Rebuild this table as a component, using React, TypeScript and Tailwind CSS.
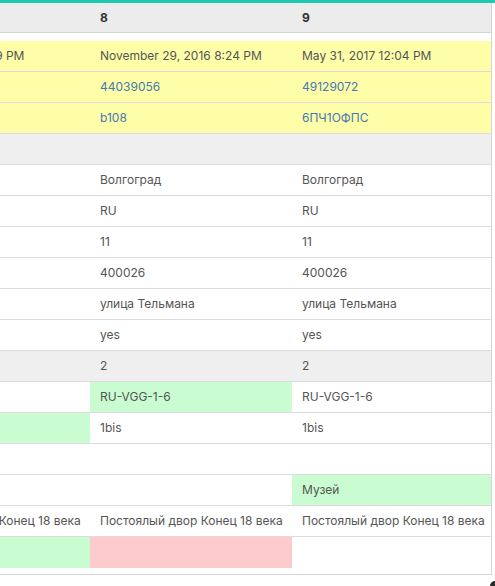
type Tone = "yellow" | "green" | "pink" | "gray" | "white";

interface Cell {
  text?: string;
  link?: boolean;
  tone?: Tone;
}

const TONE: Record<Tone, string> = {
  yellow: "bg-[#fefea9]",
  green: "bg-[#c9fdd1]",
  pink: "bg-[#fdcbcb]",
  gray: "bg-[#efefef]",
  white: "bg-white",
};

const WIDTHS = ["w-[202px]", "w-[202px]", "w-[199px]"];

// one row = [left (clipped), 8, 9]; row tone applies unless a cell overrides it
const ROWS: { tone: Tone; cells: Cell[] }[] = [
  { tone: "yellow", cells: [{ text: "June 14, 2016 1:49 PM" }, { text: "November 29, 2016 8:24 PM" }, { text: "May 31, 2017 12:04 PM" }] },
  { tone: "yellow", cells: [{}, { text: "44039056", link: true }, { text: "49129072", link: true }] },
  { tone: "yellow", cells: [{}, { text: "b108", link: true }, { text: "6ПЧ1ОФПС", link: true }] },
  { tone: "gray", cells: [{}, {}, {}] },
  { tone: "white", cells: [{}, { text: "Волгоград" }, { text: "Волгоград" }] },
  { tone: "white", cells: [{}, { text: "RU" }, { text: "RU" }] },
  { tone: "white", cells: [{}, { text: "11" }, { text: "11" }] },
  { tone: "white", cells: [{}, { text: "400026" }, { text: "400026" }] },
  { tone: "white", cells: [{}, { text: "улица Тельмана" }, { text: "улица Тельмана" }] },
  { tone: "white", cells: [{}, { text: "yes" }, { text: "yes" }] },
  { tone: "gray", cells: [{}, { text: "2" }, { text: "2" }] },
  { tone: "white", cells: [{}, { text: "RU-VGG-1-6", tone: "green" }, { text: "RU-VGG-1-6" }] },
  { tone: "white", cells: [{ tone: "green" }, { text: "1bis" }, { text: "1bis" }] },
  { tone: "white", cells: [{}, {}, {}] },
  { tone: "white", cells: [{}, {}, { text: "Музей", tone: "green" }] },
  {
    tone: "white",
    cells: [
      { text: "Постоялый двор Конец 18 века" },
      { text: "Постоялый двор Конец 18 века" },
      { text: "Постоялый двор Конец 18 века" },
    ],
  },
  { tone: "white", cells: [{ tone: "green" }, { tone: "pink" }, {}] },
];

export default function App() {
  return (
    <div className="relative w-[495px] h-[586px] overflow-hidden bg-white font-['Inter',sans-serif] text-[12px] text-[#555]">
      <div className="h-[3px] bg-[#1ec9b2]" />

      {/* table is scrolled sideways: the first column is cut at the left edge */}
      <div className="-ml-[112px] w-[604px] border-r border-b border-[#d6d6d6] pb-[6px]">
        <div className="flex h-[30px] bg-[#ececec] border-b border-[#d3d3d3]">
          {["7", "8", "9"].map((h, i) => (
            <div key={h} className={`${WIDTHS[i]} shrink-0 flex items-center pl-[10px] font-bold text-[#333] ${i === 0 ? "invisible" : ""}`}>
              {h}
            </div>
          ))}
        </div>
        <div className="h-[8px]" />

        {ROWS.map((row, r) => (
          <div key={r} className={`flex h-[31px] ${r < ROWS.length - 1 ? "border-b border-[#dcdcdc]" : "h-[30px]"}`}>
            {row.cells.map((c, i) => (
              <div
                key={i}
                className={`${WIDTHS[i]} shrink-0 flex items-center pl-[10px] whitespace-nowrap overflow-hidden ${TONE[c.tone ?? row.tone]}`}
              >
                {c.text && <span className={c.link ? "text-[#4679b4]" : ""}>{c.text}</span>}
              </div>
            ))}
          </div>
        ))}
      </div>

      <div className="absolute right-0 bottom-0 w-[5px] h-[5px] bg-[#2a2a2a] rounded-tl-[5px]" />
    </div>
  );
}
